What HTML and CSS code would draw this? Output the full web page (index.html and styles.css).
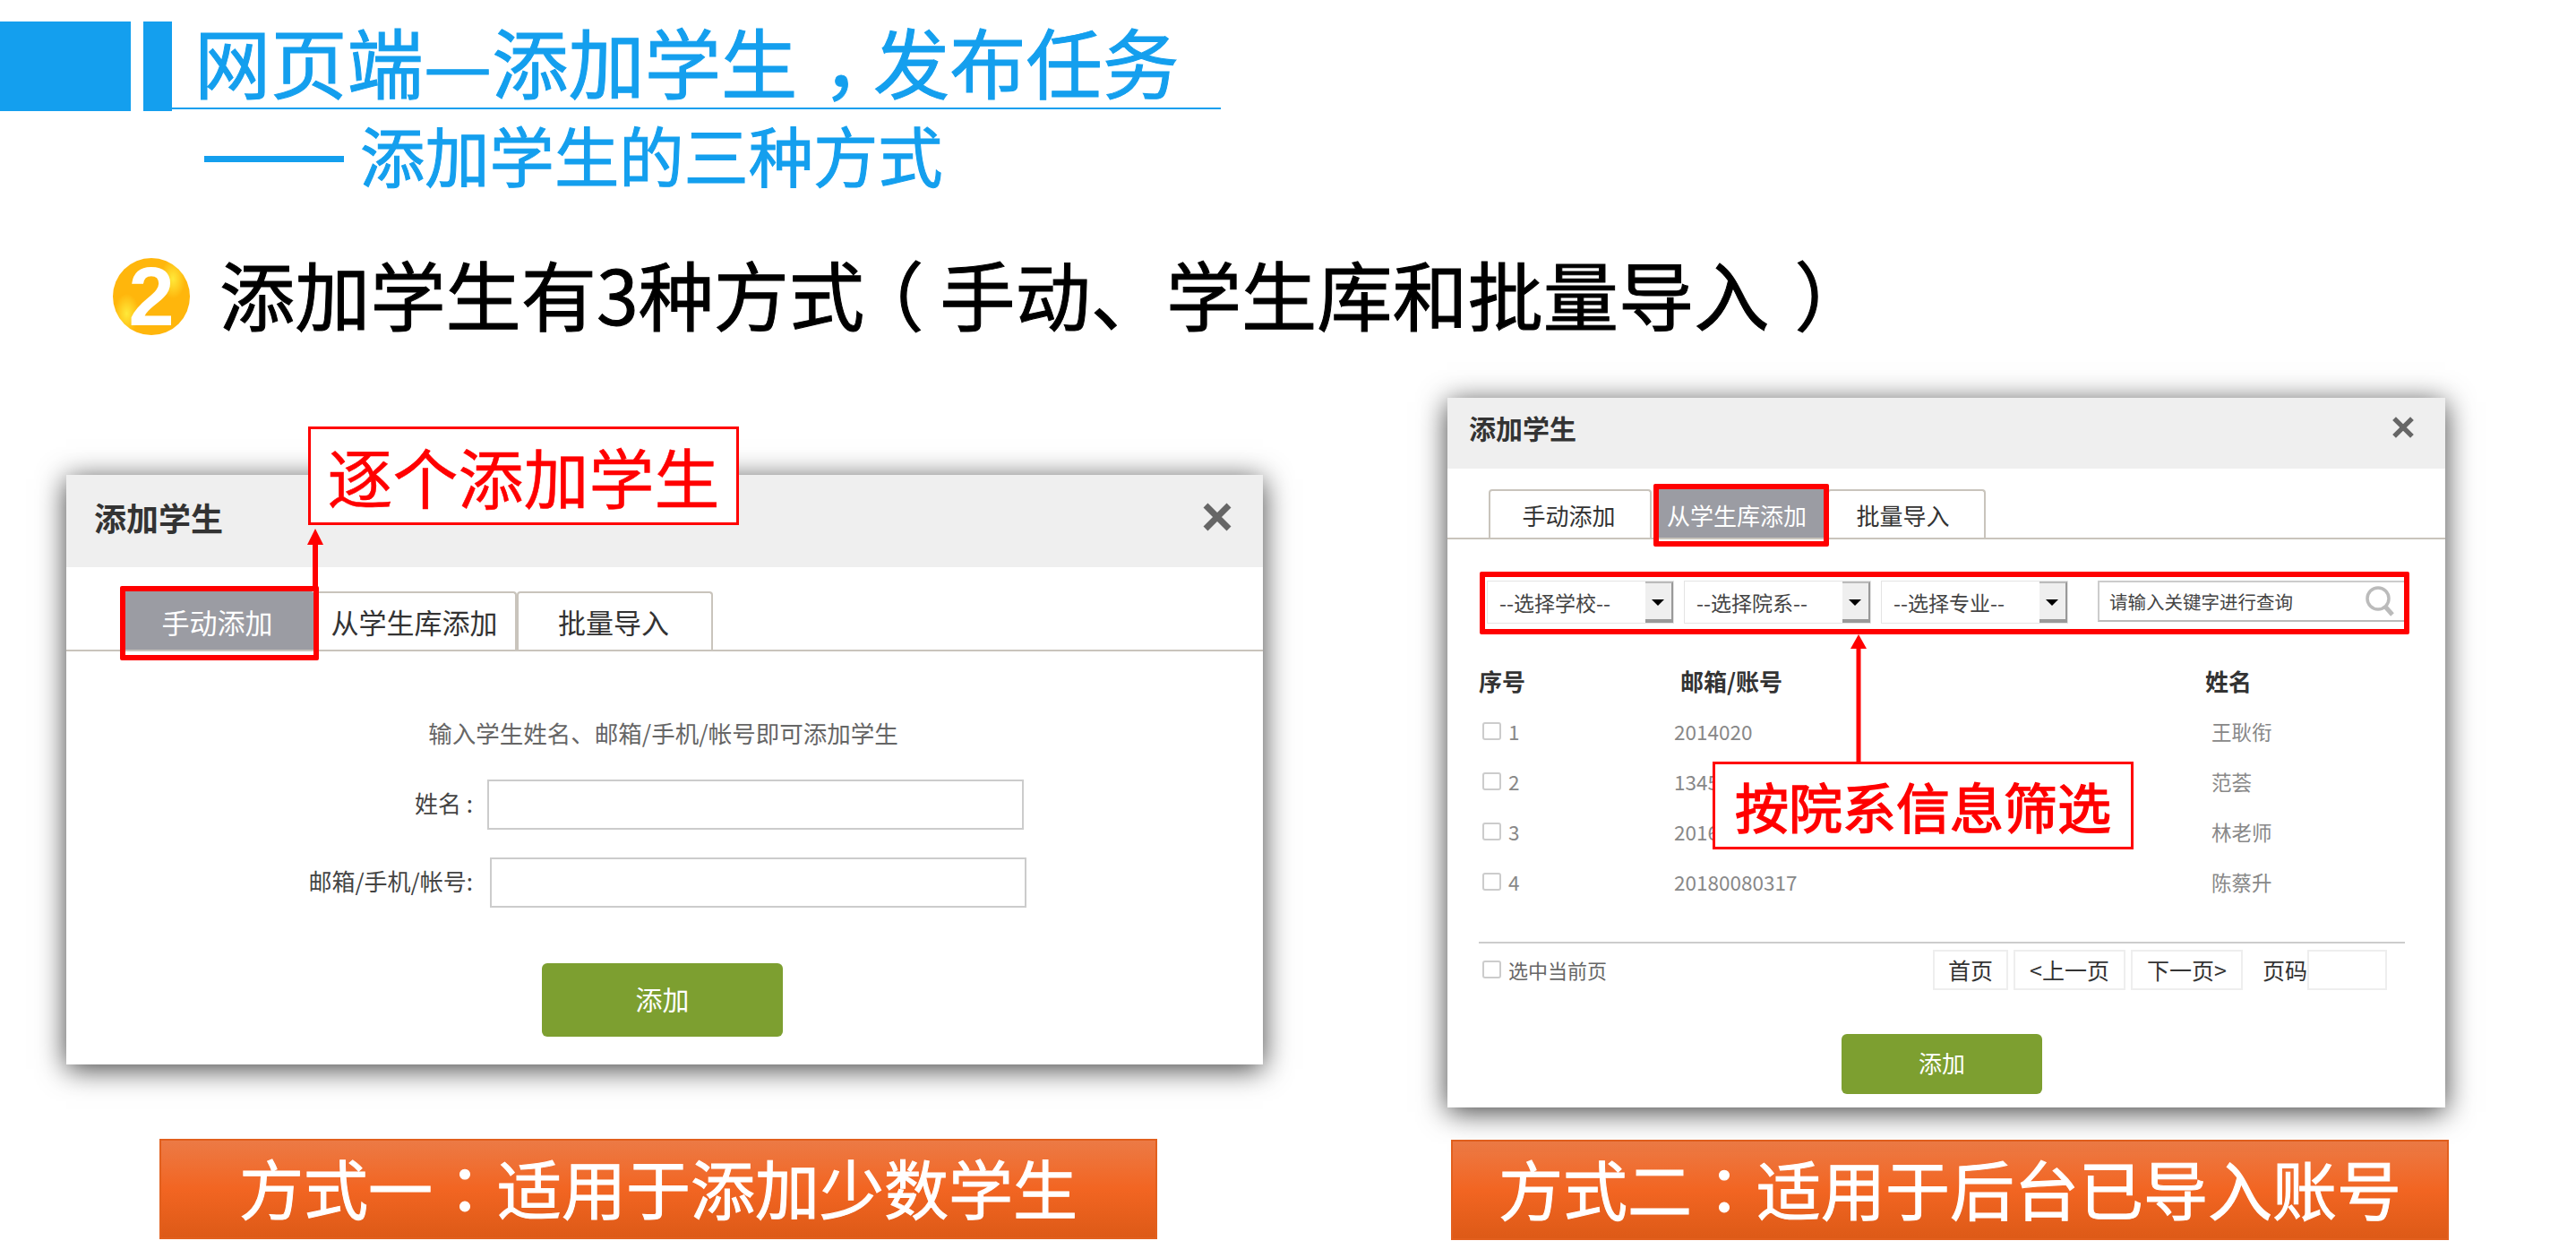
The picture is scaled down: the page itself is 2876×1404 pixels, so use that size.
FILE: index.html
```html
<!DOCTYPE html>
<html>
<head>
<meta charset="UTF-8">
<title>添加学生</title>
<link rel="stylesheet" href="styles.css">
</head>
<body>
<div class="slide">

	<div class="head">
		<div class="head-block"></div>
		<div class="head-bar"></div>
		<div class="head-title">网页端—添加学生<span class="comma">，</span>发布任务</div>
	</div>
	<div class="sub"><span class="sub-dash"></span>添加学生的三种方式</div>

	<div class="lead">
		<span class="num">2</span>
		<span class="lead-text">添加学生有3种方式<span class="paren-open">（</span>手动、学生库和批量导入<span class="paren-close">）</span></span>
	</div>

	<div class="ways">
		<!-- 方式一 -->
		<div class="way way-one">
			<div class="dialog dialog-one">
				<div class="dialog-head">
					<span>添加学生</span>
					<svg class="close" viewBox="0 0 34 34"><path d="M4 4 30 30M30 4 4 30" fill="none" stroke="#666" stroke-width="7"/></svg>
				</div>
				<div class="tabs">
					<span class="tab tab-on">手动添加</span>
					<span class="tab">从学生库添加</span>
					<span class="tab">批量导入</span>
				</div>
				<p class="intro">输入学生姓名、邮箱/手机/帐号即可添加学生</p>
				<div class="field"><label>姓名 :</label><input type="text"></div>
				<div class="field field-long"><label>邮箱/手机/帐号:</label><input type="text"></div>
				<button class="add" type="button">添加</button>

				<div class="mark mark-tab"></div>
				<svg class="arrow arrow-one" viewBox="0 0 18 70"><path d="M9 0 18 18H12V70H6V18H0Z" fill="#f00"/></svg>
				<div class="callout callout-one">逐个添加学生</div>
			</div>
			<div class="caption caption-one">方式一<span class="colon">：</span>适用于添加少数学生</div>
		</div>

		<!-- 方式二 -->
		<div class="way way-two">
			<div class="dialog dialog-two">
				<div class="dialog-head">
					<span>添加学生</span>
					<svg class="close" viewBox="0 0 34 34"><path d="M4 4 30 30M30 4 4 30" fill="none" stroke="#666" stroke-width="7"/></svg>
				</div>
				<div class="tabs">
					<span class="tab">手动添加</span>
					<span class="tab tab-on">从学生库添加</span>
					<span class="tab">批量导入</span>
				</div>
				<div class="filters">
					<div class="pick"><span>--选择学校--</span><i></i></div>
					<div class="pick"><span>--选择院系--</span><i></i></div>
					<div class="pick"><span>--选择专业--</span><i></i></div>
					<div class="search">
						<span>请输入关键字进行查询</span>
						<svg viewBox="0 0 34 34"><circle cx="15" cy="14" r="12" fill="none" stroke="#bbb" stroke-width="3.500"/><path d="M23 23 31 32" stroke="#bbb" stroke-width="5"/></svg>
					</div>
				</div>
				<div class="row row-head"><span>序号</span><span>邮箱/账号</span><span>姓名</span></div>
				<div class="row"><label><input type="checkbox">1</label><span>2014020</span><span>王耿衔</span></div>
				<div class="row"><label><input type="checkbox">2</label><span>1345</span><span>范荟</span></div>
				<div class="row"><label><input type="checkbox">3</label><span>2016</span><span>林老师</span></div>
				<div class="row"><label><input type="checkbox">4</label><span>20180080317</span><span>陈蔡升</span></div>
				<div class="foot">
					<label><input type="checkbox">选中当前页</label>
					<div class="pager">
						<span class="page">首页</span>
						<span class="page">&lt;上一页</span>
						<span class="page">下一页&gt;</span>
						<span class="page-label">页码</span>
						<span class="page-box"></span>
					</div>
				</div>
				<button class="add" type="button">添加</button>

				<div class="mark mark-tab"></div>
				<div class="mark mark-filter"></div>
				<svg class="arrow arrow-two" viewBox="0 0 18 142"><path d="M9 0 18 16H11.500V142H6.500V16H0Z" fill="#f00"/></svg>
				<div class="callout callout-two">按院系信息筛选</div>
			</div>
			<div class="caption caption-two">方式二<span class="colon">：</span>适用于后台已导入账号</div>
		</div>
	</div>

</div>
</body>
</html>
```
FILE: styles.css
```css
* {
	box-sizing: border-box;
}

body {
	margin: 0;
	background: #fff;
	font-family: "Noto Sans CJK SC", "Liberation Sans", sans-serif;
	text-spacing-trim: space-all;
}

.slide {
	width: 2876px;
	height: 1404px;
	overflow: hidden;
}

/* 标点居中 */
.colon {
	font-family: "Noto Sans CJK TC", sans-serif;
}

.comma,
.paren-open,
.paren-close {
	font-feature-settings: "halt";
}

.comma {
	margin: 0 14px 0 28px;
}

.paren-open {
	margin: 0 18px 0 24px;
}

.paren-close {
	margin: 0 14px 0 28px;
}

/* 标题 */
.head {
	display: flex;
	align-items: flex-start;
	padding-top: 24px;
	height: 124px;
}

.head-block {
	width: 146px;
	height: 100px;
	background: #149fee;
}

.head-bar {
	width: 32px;
	height: 100px;
	margin-left: 14px;
	background: #149fee;
}

.head-title {
	width: 1171px;
	height: 98px;
	padding-left: 25px;
	border-bottom: 2px solid #149fee;
	color: #149fee;
	font-size: 85.300px;
	line-height: 86px;
	white-space: nowrap;
	-webkit-text-stroke: 1px #149fee;
}

.sub {
	display: flex;
	align-items: center;
	height: 72px;
	margin-top: 12px;
	padding-left: 228px;
	color: #149fee;
	font-size: 72.300px;
	line-height: 72px;
	-webkit-text-stroke: 1px #149fee;
}

.sub-dash {
	width: 156px;
	height: 7px;
	margin: 10px 18px 0 0;
	background: #149fee;
}

.lead {
	display: flex;
	align-items: center;
	height: 86px;
	margin-top: 80px;
	padding-left: 126px;
}

.num {
	width: 86px;
	height: 86px;
	margin-right: 33px;
	border-radius: 50%;
	background:
		radial-gradient(ellipse 14px 22px at 78% 27%, #ffe93a, rgba(255, 233, 58, 0)),
		radial-gradient(ellipse 14px 22px at 18% 72%, #ffe93a, rgba(255, 233, 58, 0)),
		#ffb60c;
	color: #fff;
	font-family: "Liberation Sans", sans-serif;
	font-size: 92px;
	font-weight: bold;
	line-height: 86px;
	text-align: center;
}

.lead-text {
	padding-bottom: 10px;
	color: #000;
	font-size: 84.200px;
	line-height: 86px;
	white-space: nowrap;
	-webkit-text-stroke: 1px #000;
}

/* 两种方式 */
.ways {
	display: flex;
	gap: 206px;
	margin-top: 53px;
	padding-left: 74px;
}

.way {
	position: relative;
	width: 1336px;
}

.way-two {
	width: 1118px;
}

.dialog {
	position: relative;
	background: #fff;
	box-shadow: 0 5px 30px rgba(0, 0, 0, 0.75);
}

.dialog-one {
	height: 658px;
	margin-top: 103px;
}

.dialog-two {
	width: 1114px;
	height: 792px;
	margin-top: 17px;
}

.dialog-head {
	display: flex;
	justify-content: space-between;
	align-items: center;
	height: 103px;
	padding: 0 34px 10px 31px;
	background: #efefef;
	color: #333;
	font-size: 36px;
	font-weight: bold;
}

.close {
	width: 34px;
	height: 34px;
}

.dialog-two .dialog-head {
	height: 79px;
	padding: 0 34px 14px 24px;
	font-size: 30px;
}

.dialog-two .close {
	width: 26px;
	height: 26px;
}

.tabs {
	display: flex;
	height: 94px;
	padding: 27px 0 0 63px;
	border-bottom: 2px solid #c9c4bc;
}

.tab {
	display: flex;
	justify-content: center;
	align-items: center;
	width: 226px;
	padding-right: 3px;
	border: 2px solid #c9c4bc;
	border-bottom: 0;
	border-radius: 4px 4px 0 0;
	color: #333;
	font-size: 31px;
}

.tab-on {
	width: 214px;
	border-color: #9b9ca3;
	background: #9b9ca3;
	color: #fff;
}

.tab:last-child {
	width: 219px;
}

.dialog-two .tabs {
	height: 79px;
	padding: 23px 0 0 46px;
}

.dialog-two .tab {
	width: 182px;
	font-size: 26px;
}

.dialog-two .tab-on {
	width: 192px;
	margin-left: 4px;
	padding-right: 10px;
}

.dialog-two .tab:last-child {
	width: 177px;
	padding-right: 8px;
}

/* 方式一 表单 */
.intro {
	margin: 72px 0 0;
	padding-right: 3px;
	color: #666;
	font-size: 26.500px;
	line-height: 38px;
	text-align: center;
}

.field {
	display: flex;
	align-items: center;
	margin-top: 31px;
	color: #444;
	font-size: 26px;
}

.intro + .field {
	margin-top: 33px;
}

.field label {
	width: 454px;
	padding-bottom: 5px;
	text-align: right;
	white-space: nowrap;
}

.field input {
	width: 599px;
	height: 56px;
	margin-left: 16px;
	border: 2px solid #ccc;
	background: #fff;
}

.field-long input {
	margin-left: 19px;
}

.add {
	display: block;
	width: 269px;
	height: 82px;
	margin: 62px 0 0 531px;
	padding: 0 0 4px;
	border: 0;
	border-radius: 6px;
	background: #7d9f30;
	color: #fff;
	font-family: inherit;
	font-size: 30px;
}

/* 标注 */
.mark {
	position: absolute;
	border: 6px solid #f00;
	border-radius: 2px;
}

.dialog-one .mark-tab {
	left: 60px;
	top: 124px;
	width: 222px;
	height: 83px;
}

.dialog-two .mark-tab {
	left: 230px;
	top: 96px;
	width: 196px;
	height: 70px;
}

.mark-filter {
	left: 36px;
	top: 194px;
	width: 1038px;
	height: 70px;
}

.arrow {
	position: absolute;
	display: block;
}

.arrow-one {
	left: 269px;
	top: 60px;
	width: 18px;
	height: 70px;
}

.arrow-two {
	left: 450px;
	top: 264px;
	width: 18px;
	height: 142px;
}

.callout {
	position: absolute;
	display: flex;
	justify-content: center;
	align-items: center;
	padding-bottom: 2px;
	border: 3px solid #f00;
	background: #fff;
	color: #f00;
	white-space: nowrap;
}

.callout-one {
	left: 270px;
	top: -54px;
	width: 481px;
	height: 110px;
	font-size: 73px;
	-webkit-text-stroke: 0.500px #f00;
}

.callout-two {
	left: 296px;
	top: 406px;
	width: 470px;
	height: 98px;
	font-size: 60px;
	-webkit-text-stroke: 1.500px #f00;
}

/* 方式二 筛选 */
.filters {
	display: flex;
	gap: 11px;
	margin-top: 46px;
	padding-left: 44px;
}

.pick {
	display: flex;
	justify-content: space-between;
	width: 209px;
	height: 48px;
	padding-left: 13px;
	border: 1px solid #e4e4e4;
	color: #444;
	font-size: 23px;
	line-height: 46px;
	white-space: nowrap;
}

.pick i {
	position: relative;
	width: 31px;
	border-top: 2px solid #bbb;
	border-right: 2px solid #999;
	border-bottom: 4px solid #999;
	background: #efefef;
}

.pick i::after {
	content: "";
	position: absolute;
	left: 7px;
	top: 18px;
	border: 7px solid transparent;
	border-top: 7px solid #000;
	border-bottom: 0;
}

.search {
	display: flex;
	justify-content: space-between;
	align-items: center;
	width: 342px;
	height: 46px;
	margin-left: 22px;
	padding: 0 10px 0 11px;
	border-top: 2px solid #ccc;
	border-left: 2px solid #ccc;
	border-bottom: 2px solid #bbb;
	color: #444;
	font-size: 20.500px;
	white-space: nowrap;
}

.search svg {
	width: 34px;
	height: 34px;
}

/* 方式二 列表 */
.row {
	display: grid;
	grid-template-columns: 218px 600px 1fr;
	align-items: center;
	height: 56px;
	margin-left: 35px;
	color: #888;
	font-size: 22.500px;
}

.row label {
	display: flex;
	align-items: center;
	padding-left: 4px;
}

.row-head {
	margin-top: 35px;
	color: #333;
	font-size: 26px;
	font-weight: bold;
}

.row-head + .row {
	margin-top: 1px;
}

.row-head span:nth-child(2) {
	padding-left: 7px;
}

.row-head span:last-child {
	margin-left: -7px;
}

input[type="checkbox"] {
	appearance: none;
	width: 21px;
	height: 20px;
	margin: 0 8px 0 0;
	border: 2px solid #ccc;
	border-radius: 3px;
	background: #fff;
}

.foot {
	display: flex;
	justify-content: space-between;
	align-items: center;
	width: 1034px;
	height: 64px;
	margin: 39px 0 0 35px;
	padding: 0 20px 4px 4px;
	border-top: 2px solid #ccc;
	color: #666;
	font-size: 22px;
}

.foot label {
	display: flex;
	align-items: center;
}

.pager {
	display: flex;
	align-items: center;
	color: #333;
	font-size: 25px;
}

.page {
	display: flex;
	justify-content: center;
	align-items: center;
	width: 125px;
	height: 45px;
	margin-right: 6px;
	border: 2px solid #eee;
	white-space: nowrap;
}

.page:first-child {
	width: 84px;
}

.page-label {
	margin-left: 16px;
}

.page-box {
	width: 89px;
	height: 45px;
	border: 2px solid #eee;
}

.dialog-two .add {
	width: 224px;
	height: 67px;
	margin-top: 39px;
	margin-left: 440px;
	font-size: 26px;
}

/* 说明条 */
.caption {
	display: flex;
	justify-content: center;
	align-items: center;
	width: 1114px;
	height: 112px;
	padding-bottom: 8px;
	border: 2px solid #e2601e;
	background: linear-gradient(#ec7a45, #f26522 50%, #dd5a17);
	color: #fff;
	font-size: 72px;
	white-space: nowrap;
	-webkit-text-stroke: 1px #fff;
}

.caption-one {
	margin: 83px 0 0 104px;
}

.caption-two {
	margin: 36px 0 0 4px;
}
```
